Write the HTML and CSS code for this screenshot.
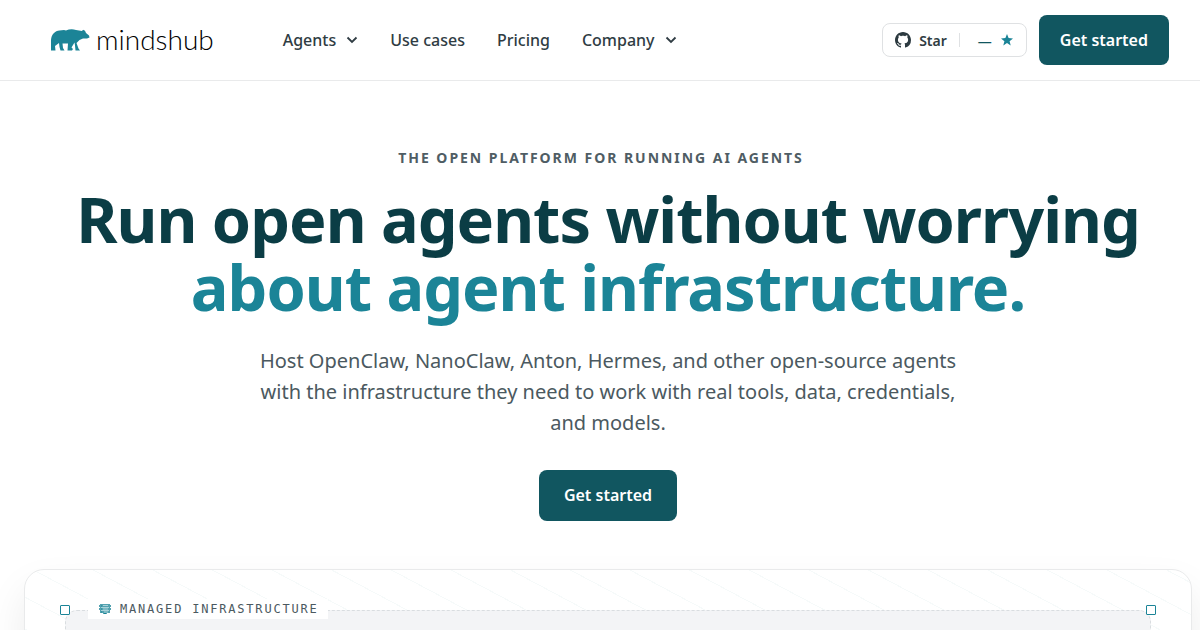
FILE: index.html
```html
<!DOCTYPE html>
<html lang="en">
<head>
    <meta charset="UTF-8" />
    <meta name="viewport" content="width=device-width, initial-scale=1.0" />
    <title>mindshub</title>
    <link rel="stylesheet" href="styles.css">
</head>
<body>
    <header class="header">
        <a class="logo" href="#">
            <svg width="40" height="24" viewBox="0 0 40 24" fill="#1b8497" aria-hidden="true">
                <path d="M1 22.500V12C1.500 6 5 3 9.500 2.500L14 2L16 2.500C19 1 23 .8 26 2L29 2.500L32 3L33 1.700L35 2.700L36 5L39 7.500L39.500 9.500L37 10.500L33 10.500L29.500 12L26.500 15L28.500 20.500L30 22.500H25.500L25 17.500L24.500 14.500L21.500 19.500L23 21L22 22.500H17.500L18 15.500H12.500L13 20L14.500 22.500H10.500L9.500 19L9 15L5 18L5.500 22.500Z"/>
            </svg>
            <span>mindshub</span>
        </a>
        <nav class="nav">
            <button class="nav-item" type="button">Agents
                <svg width="12" height="8" viewBox="0 0 12 8" fill="none" stroke="currentColor" stroke-width="1.800"><path d="M1.500 1.500L6 6L10.500 1.500"/></svg>
            </button>
            <a class="nav-item" href="#">Use cases</a>
            <a class="nav-item" href="#">Pricing</a>
            <button class="nav-item" type="button">Company
                <svg width="12" height="8" viewBox="0 0 12 8" fill="none" stroke="currentColor" stroke-width="1.800"><path d="M1.500 1.500L6 6L10.500 1.500"/></svg>
            </button>
        </nav>
        <div class="actions">
            <a class="github" href="#">
                <svg width="16" height="16" viewBox="0 0 16 16" fill="#2c3a40" aria-hidden="true"><path d="M8 0C3.580 0 0 3.580 0 8c0 3.540 2.290 6.530 5.470 7.590.4.070.55-.17.55-.38 0-.19-.01-.82-.01-1.490-2.010.37-2.530-.49-2.690-.94-.09-.23-.48-.94-.82-1.130-.28-.15-.68-.52-.01-.53.63-.01 1.080.58 1.230.82.72 1.210 1.870.87 2.330.66.07-.52.28-.87.51-1.070-1.780-.2-3.640-.89-3.640-3.950 0-.87.31-1.590.82-2.150-.08-.2-.36-1.020.08-2.120 0 0 .67-.21 2.200.82.64-.18 1.320-.27 2-.27s1.360.09 2 .27c1.530-1.040 2.200-.82 2.200-.82.44 1.100.16 1.920.08 2.120.51.56.82 1.270.82 2.150 0 3.070-1.870 3.750-3.650 3.950.29.25.54.73.54 1.480 0 1.070-.01 1.930-.01 2.200 0 .21.15.46.55.38A8.010 8.010 0 0 0 16 8c0-4.420-3.580-8-8-8z"/></svg>
                <span>Star</span>
                <span class="stars">—
                    <svg width="12" height="12" viewBox="0 0 12 12" fill="#1b8497" aria-hidden="true"><path d="M6 0L7.600 4.100L12 4.400L8.600 7.200L9.700 11.500L6 9.100L2.300 11.500L3.400 7.200L0 4.400L4.400 4.100Z"/></svg>
                </span>
            </a>
            <button class="btn" type="button">Get started</button>
        </div>
    </header>

    <main>
        <p class="eyebrow">The open platform for running AI agents</p>
        <div class="wide">
            <h1>Run open agents without worrying <span>about agent infrastructure.</span></h1>
            <p class="lead">Host OpenClaw, NanoClaw, Anton, Hermes, and other open-source agents with the infrastructure they need to work with real tools, data, credentials, and models.</p>
            <button class="btn btn-hero" type="button">Get started</button>

            <section class="diagram">
                <div class="zone">
                    <i class="handle handle-left"></i>
                    <i class="handle handle-right"></i>
                    <h2 class="zone-label">
                        <svg width="12" height="11" viewBox="0 0 12 11" aria-hidden="true">
                            <path fill="#53a2b0" d="M1 0h10v1h1v2h-1v1h1v2h-1v3H8v1H4V9H1V6H0V4h1V3H0V1h1z"/>
                            <path stroke="#a9d2d9" d="M2 3.500h8M2 6.500h8M4 1.500h5M4 5h5M5 8h4"/>
                            <path stroke="#1b8497" d="M2 2h1M2 5h1M2 8h1M5 9.500h2"/>
                        </svg>
                        Managed infrastructure
                    </h2>
                </div>
            </section>
        </div>
    </main>
</body>
</html>
```
FILE: styles.css
```css
* {
    box-sizing: border-box;
}
body {
    margin: 0;
    overflow-x: hidden;
    background: #fff;
    color: #2f3c43;
    font-family: "Noto Sans", sans-serif;
    font-size: 16px;
}
a {
    color: inherit;
    text-decoration: none;
}
button {
    border: none;
    background: none;
    color: inherit;
    font: inherit;
    cursor: pointer;
}
.header {
    display: flex;
    align-items: center;
    height: 81px;
    padding: 0 31px 0 50px;
    border-bottom: 1px solid #e9eaeb;
}
.logo {
    display: flex;
    align-items: center;
    gap: 6px;
    color: #000;
    font-family: Lato, sans-serif;
    font-size: 28px;
    font-weight: 300;
    line-height: 32px;
}
.logo span {
    padding-bottom: 2px;
}
.nav {
    display: flex;
    gap: 32px;
    margin-left: 69px;
}
.nav-item {
    display: flex;
    align-items: center;
    gap: 10px;
    padding: 0;
    font-weight: 500;
    line-height: 24px;
}
.actions {
    display: flex;
    align-items: center;
    gap: 12px;
    margin-left: auto;
}
.github {
    display: flex;
    align-items: center;
    gap: 8px;
    height: 34px;
    padding: 0 13px 0 12px;
    border: 1px solid #dfe1e3;
    border-radius: 8px;
    font-size: 14px;
    font-weight: 600;
}
.stars {
    display: flex;
    align-items: center;
    gap: 9px;
    height: 14px;
    margin-left: 4px;
    padding-left: 18px;
    border-left: 1px solid #dfe1e3;
    color: #115660;
}
.btn {
    height: 50px;
    padding: 0 21px;
    border-radius: 8px;
    background: #115660;
    color: #fff;
    font-weight: 600;
}
.eyebrow {
    margin: 66px 0 0;
    color: #4f5d64;
    font-size: 14px;
    font-weight: 700;
    line-height: 22px;
    letter-spacing: 0.14em;
    text-indent: 2px;
    text-align: center;
    text-transform: uppercase;
}
.wide {
    margin-right: -16px;
    padding: 0 24px;
    text-align: center;
}
h1 {
    margin: 16px 0 0;
    color: #0b3d45;
    font-size: 63px;
    font-weight: 700;
    line-height: 68px;
    letter-spacing: -1px;
}
h1 span {
    display: block;
    color: #1b8497;
}
.lead {
    max-width: 720px;
    margin: 24px auto 32px;
    color: #4b5960;
    font-size: 20px;
    line-height: 31px;
}
.btn-hero {
    height: 51px;
    padding: 0 25px 2px;
}
.diagram {
    height: 536px;
    margin-top: 48px;
    padding: 40px;
    border: 1px solid #e9eaeb;
    border-radius: 20px;
    background: repeating-linear-gradient(28deg, transparent 0 27px, #f6fafa 27px 28px);
    box-shadow: 0 20px 40px rgba(0, 0, 0, 0.08);
}
.zone {
    position: relative;
    height: 100%;
    border: 1px dashed #d9dde0;
    border-radius: 12px;
    background: #f3f4f6;
}
.handle {
    position: absolute;
    top: -6px;
    width: 10px;
    height: 10px;
    border: 1px solid #1b8497;
    border-radius: 1px;
    background: #fff;
}
.handle-left {
    left: -6px;
}
.handle-right {
    right: -6px;
}
.zone-label {
    position: absolute;
    top: -12px;
    left: 22px;
    display: flex;
    align-items: center;
    gap: 9px;
    margin: 0;
    padding: 0 9px 0 11px;
    background: #fff;
    color: #4b5960;
    font-family: "DejaVu Sans Mono", monospace;
    font-size: 12px;
    font-weight: 400;
    line-height: 20px;
    letter-spacing: 0.15em;
    text-transform: uppercase;
}
```
